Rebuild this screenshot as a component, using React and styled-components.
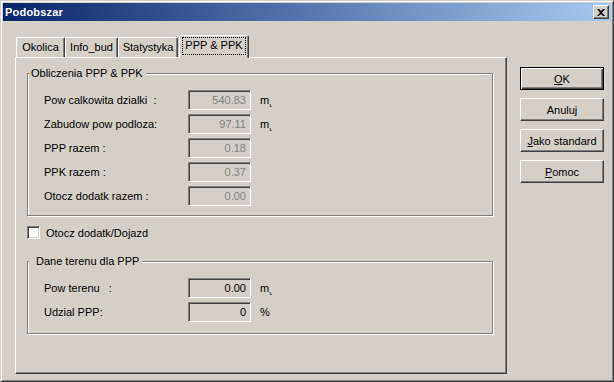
import React from 'react';
import styled, { createGlobalStyle } from 'styled-components';

const GlobalStyle = createGlobalStyle`
  html, body {
    margin: 0;
    padding: 0;
    background: #d4d0c8;
  }
  body {
    font-family: 'Liberation Sans', Arial, sans-serif;
    font-size: 11px;
    color: #000;
  }
`;

const Frame = styled.div`
  width: 614px;
  height: 382px;
  box-sizing: border-box;
  background: #d4d0c8;
  border: 1px solid;
  border-color: #d4d0c8 #404040 #404040 #d4d0c8;
  box-shadow: inset 1px 1px 0 #fff, inset -1px -1px 0 #808080;
  padding: 2px;
  display: flex;
  flex-direction: column;
`;

const TitleBar = styled.div`
  height: 18px;
  display: flex;
  align-items: center;
  justify-content: space-between;
  padding: 0 2px 0 2px;
  background: linear-gradient(to right, #0a246a, #a6caf0);
`;

const Title = styled.span`
  color: #fff;
  font-weight: bold;
  font-size: 11px;
  letter-spacing: 0.2px;
`;

const CloseButton = styled.div`
  width: 16px;
  height: 14px;
  box-sizing: border-box;
  background: #d4d0c8;
  border: 1px solid;
  border-color: #fff #404040 #404040 #fff;
  box-shadow: inset -1px -1px 0 #808080;
  display: flex;
  align-items: center;
  justify-content: center;
`;

const Client = styled.div`
  flex: 1;
  display: flex;
  padding: 14px 0 0 12px;
`;

const Tabs = styled.div`
  display: flex;
  flex-direction: column;
`;

const TabStrip = styled.div`
  display: flex;
  align-items: flex-end;
  height: 22px;
  padding-left: 1px;
  position: relative;
  z-index: 1;
`;

const Tab = styled.div`
  box-sizing: border-box;
  width: ${(p) => p.$w}px;
  height: ${(p) => (p.$active ? 23 : 20)}px;
  margin-left: ${(p) => (p.$active ? 1 : 0)}px;
  margin-bottom: ${(p) => (p.$active ? -1 : 0)}px;
  align-self: ${(p) => (p.$active ? 'flex-end' : 'flex-start')};
  margin-top: ${(p) => (p.$active ? 0 : 2)}px;
  background: #d4d0c8;
  border-top: 1px solid #fff;
  border-left: 1px solid #fff;
  border-right: 1px solid #404040;
  border-radius: 2px 2px 0 0;
  box-shadow: inset -1px 0 0 #808080;
  display: flex;
  align-items: ${(p) => (p.$active ? 'flex-start' : 'center')};
  justify-content: center;
  padding-top: ${(p) => (p.$active ? 2 : 0)}px;
`;

const TabLabel = styled.span`
  padding: 1px 2px 2px 2px;
  outline: ${(p) => (p.$focus ? '1px dotted #000' : 'none')};
  outline-offset: 0;
  line-height: 13px;
`;

const Panel = styled.div`
  box-sizing: border-box;
  width: 492px;
  height: 317px;
  border: 1px solid;
  border-color: #fff #404040 #404040 #fff;
  box-shadow: inset -1px -1px 0 #808080;
  padding: 9px 0 0 11px;
  display: flex;
  flex-direction: column;
  align-items: flex-start;
`;

const Group = styled.fieldset`
  box-sizing: border-box;
  width: 466px;
  height: ${(p) => p.$h}px;
  margin: ${(p) => p.$mt}px 0 0 0;
  padding: 10px 0 0 0;
  border: 1px solid #808080;
  box-shadow: 1px 1px 0 #fff, inset 1px 1px 0 #fff;
  min-width: 0;
`;

const Legend = styled.legend`
  padding: 0 3px 0 ${(p) => p.$pl}px;
  margin-left: 1px;
  line-height: 13px;
  background: #d4d0c8;
`;

const Rows = styled.div`
  display: flex;
  flex-direction: column;
  gap: 4px;
  padding-left: 16px;
`;

const Row = styled.div`
  display: flex;
  align-items: center;
  height: 20px;
`;

const Label = styled.span`
  width: 144px;
  white-space: pre;
`;

const Field = styled.div`
  box-sizing: border-box;
  width: 63px;
  height: 20px;
  border: 1px solid;
  border-color: #808080 #fff #fff #808080;
  box-shadow: inset 1px 1px 0 #404040, inset -1px -1px 0 #d4d0c8;
  background: #d4d0c8;
  color: ${(p) => (p.$disabled ? '#808080' : '#000')};
  text-align: right;
  padding: 3px 4px 0 0;
  line-height: 13px;
`;

const Unit = styled.span`
  margin-left: 9px;
`;

const CheckRow = styled.label`
  display: flex;
  align-items: center;
  margin-top: 10px;
  gap: 6px;
  height: 13px;
`;

const CheckBox = styled.span`
  box-sizing: border-box;
  width: 13px;
  height: 13px;
  background: #fff;
  border: 1px solid;
  border-color: #808080 #fff #fff #808080;
  box-shadow: inset 1px 1px 0 #404040, inset -1px -1px 0 #d4d0c8;
`;

const ButtonColumn = styled.div`
  display: flex;
  flex-direction: column;
  gap: 8px;
  margin: 32px 0 0 13px;
`;

const Button = styled.div`
  box-sizing: border-box;
  width: 84px;
  height: 23px;
  background: #d4d0c8;
  border: 1px solid;
  border-color: ${(p) => (p.$default ? '#000' : '#fff #404040 #404040 #fff')};
  box-shadow: ${(p) =>
    p.$default
      ? 'inset 1px 1px 0 #fff, inset -1px -1px 0 #404040, inset -2px -2px 0 #808080'
      : 'inset -1px -1px 0 #808080'};
  display: flex;
  align-items: center;
  justify-content: center;
`;

const Key = styled.span`
  text-decoration: underline;
`;

const groupOne = [
  { label: 'Pow calkowita dzialki  :', value: '540.83', unit: 'm˛' },
  { label: 'Zabudow pow podloza:', value: '97.11', unit: 'm˛' },
  { label: 'PPP razem :', value: '0.18' },
  { label: 'PPK razem :', value: '0.37' },
  { label: 'Otocz dodatk razem :', value: '0.00' },
];

const groupTwo = [
  { label: 'Pow terenu   :', value: '0.00', unit: 'm˛' },
  { label: 'Udzial PPP:', value: '0', unit: '%' },
];

const tabs = [
  { name: 'Okolica', w: 49 },
  { name: 'Info_bud', w: 53 },
  { name: 'Statystyka', w: 60 },
  { name: 'PPP & PPK', w: 70, active: true },
];

export default function App() {
  return (
    <>
      <GlobalStyle />
      <Frame>
        <TitleBar>
          <Title>Podobszar</Title>
          <CloseButton>
            <svg width="8" height="7" viewBox="0 0 8 7">
              <path d="M0 0h2l2 2 2-2h2L5 3.5 8 7H6L4 5 2 7H0l3-3.5z" fill="#000" />
            </svg>
          </CloseButton>
        </TitleBar>
        <Client>
          <Tabs>
            <TabStrip>
              {tabs.map((t) => (
                <Tab key={t.name} $w={t.w} $active={t.active}>
                  <TabLabel $focus={t.active}>{t.name}</TabLabel>
                </Tab>
              ))}
            </TabStrip>
            <Panel>
              <Group $h={149} $mt={0}>
                <Legend $pl={2}>Obliczenia PPP &amp; PPK</Legend>
                <Rows>
                  {groupOne.map((r) => (
                    <Row key={r.label}>
                      <Label>{r.label}</Label>
                      <Field $disabled>{r.value}</Field>
                      {r.unit && <Unit>{r.unit}</Unit>}
                    </Row>
                  ))}
                </Rows>
              </Group>
              <CheckRow>
                <CheckBox />
                Otocz dodatk/Dojazd
              </CheckRow>
              <Group $h={79} $mt={16}>
                <Legend $pl={7}>Dane terenu dla PPP</Legend>
                <Rows>
                  {groupTwo.map((r) => (
                    <Row key={r.label}>
                      <Label>{r.label}</Label>
                      <Field>{r.value}</Field>
                      <Unit>{r.unit}</Unit>
                    </Row>
                  ))}
                </Rows>
              </Group>
            </Panel>
          </Tabs>
          <ButtonColumn>
            <Button $default>
              <span><Key>O</Key>K</span>
            </Button>
            <Button>Anuluj</Button>
            <Button>
              <span><Key>J</Key>ako standard</span>
            </Button>
            <Button>
              <span><Key>P</Key>omoc</span>
            </Button>
          </ButtonColumn>
        </Client>
      </Frame>
    </>
  );
}
